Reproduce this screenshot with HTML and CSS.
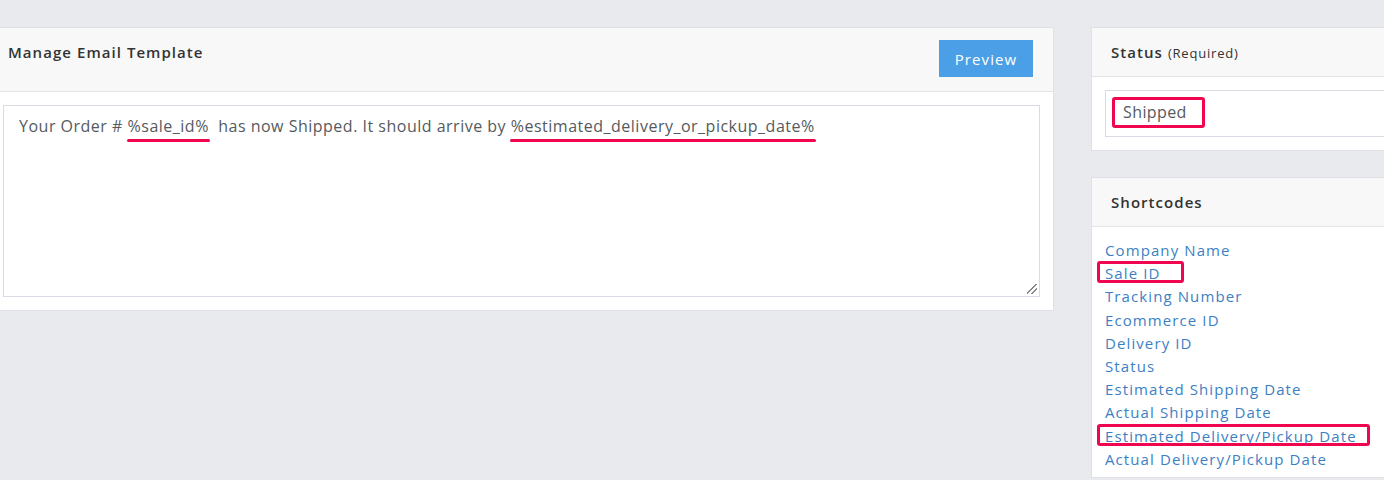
FILE: index.html
```html
<!DOCTYPE html>
<html>

<head>
    <title>Manage Email Template</title>
    <link rel="stylesheet" href="styles.css">
</head>

<body>
    <div class="page">
        <div class="main-col">
            <div class="card">
                <div class="card-head template-head">
                    <h3 class="card-title">Manage Email Template</h3>
                    <button class="btn-preview">Preview</button>
                </div>
                <div class="card-body template-body">
                    <div class="editor">Your Order # <span class="mark">%sale_id%</span>&nbsp; has now Shipped. It should arrive by <span class="mark">%estimated_delivery_or_pickup_date%</span></div>
                </div>
            </div>
        </div>

        <div class="side-col">
            <div class="card">
                <div class="card-head">
                    <h3 class="card-title">Status <small>(Required)</small></h3>
                </div>
                <div class="card-body status-body">
                    <div class="select"><span class="boxed">Shipped</span></div>
                </div>
            </div>

            <div class="card">
                <div class="card-head">
                    <h3 class="card-title">Shortcodes</h3>
                </div>
                <ul class="codes">
                    <li><a href="#">Company Name</a></li>
                    <li><a href="#" class="hl hl-short">Sale ID</a></li>
                    <li><a href="#">Tracking Number</a></li>
                    <li><a href="#">Ecommerce ID</a></li>
                    <li><a href="#">Delivery ID</a></li>
                    <li><a href="#">Status</a></li>
                    <li><a href="#">Estimated Shipping Date</a></li>
                    <li><a href="#">Actual Shipping Date</a></li>
                    <li><a href="#" class="hl hl-long">Estimated Delivery/Pickup Date</a></li>
                    <li><a href="#">Actual Delivery/Pickup Date</a></li>
                </ul>
            </div>
        </div>
    </div>
</body>

</html>
```

FILE: styles.css
```css
body {
    margin: 0px;
    background-color: #e9eaee;
    font-family: "Open Sans", sans-serif;
    color: #555a60;
    overflow: hidden;
}

.page {
    display: grid;
    grid-template-columns: 1066px 330px;
    column-gap: 37px;
    align-items: start;
    margin-left: -12px;
    padding-top: 27px;
}

.side-col {
    display: flex;
    flex-direction: column;
    gap: 26px;
}

.card {
    background-color: white;
    border: 1px solid #dfe1e6;
}

.card-head {
    display: flex;
    align-items: center;
    justify-content: space-between;
    height: 48px;
    padding: 0px 20px 0px 19px;
    background-color: #f8f8f8;
    border-bottom: 1px solid #e2e4e8;
}

.template-head {
    height: 63px;
    align-items: flex-start;
}

.card-title {
    margin: 0px;
    font-size: 15px;
    font-weight: 600;
    color: #333;
    letter-spacing: 1.05px;
}

.template-head .card-title {
    margin-top: 14px;
}

.card-title small {
    font-size: 13px;
    font-weight: normal;
    letter-spacing: 0.8px;
}

.btn-preview {
    margin-top: 12px;
    width: 94px;
    height: 37px;
    border: 0px;
    background-color: #4a9fe6;
    color: white;
    font-family: "Open Sans", sans-serif;
    font-size: 15px;
    letter-spacing: 1.1px;
    cursor: pointer;
}

.template-body {
    padding: 13px 13px 13px 14px;
}

.editor {
    position: relative;
    height: 174px;
    padding: 8px 15px;
    border: 1px solid #d8dbe3;
    font-size: 16px;
    line-height: 24px;
    letter-spacing: 0.5px;
    color: #555a60;
}

.editor::after {
    content: "";
    position: absolute;
    right: 2px;
    bottom: 2px;
    width: 10px;
    height: 10px;
    background: linear-gradient(135deg, transparent 45%, #888 45%, #888 52%, transparent 52%, transparent 70%, #888 70%, #888 77%, transparent 77%);
}

.mark {
    position: relative;
}

.mark::after {
    content: "";
    position: absolute;
    left: -1px;
    right: -1px;
    bottom: -5px;
    height: 3px;
    border-radius: 2px;
    background-color: #f0064f;
}

.status-body {
    padding: 13px 0px 13px 13px;
}

.select {
    height: 33px;
    padding: 6px;
    border: 1px solid #d8dbe3;
    border-right: 0px;
}

.boxed {
    display: inline-block;
    padding: 0px 15px 0px 8px;
    height: 25px;
    line-height: 25px;
    border: 3px solid #f0064f;
    border-radius: 3px;
    font-size: 16px;
    letter-spacing: 0.4px;
    color: #555a60;
}

.codes {
    list-style: none;
    margin: 0px;
    padding: 12px 13px 6px 13px;
}

.codes li {
    line-height: 23.2px;
    font-size: 15px;
    letter-spacing: 1.1px;
}

.codes a {
    color: #3d7fc4;
    text-decoration: none;
}

.hl {
    position: relative;
}

.hl::after {
    content: "";
    position: absolute;
    left: -8px;
    top: -2px;
    height: 16px;
    border: 3px solid #f0064f;
    border-radius: 3px;
}

.hl-short::after {
    width: 81px;
}

.hl-long::after {
    width: 267px;
}
```
